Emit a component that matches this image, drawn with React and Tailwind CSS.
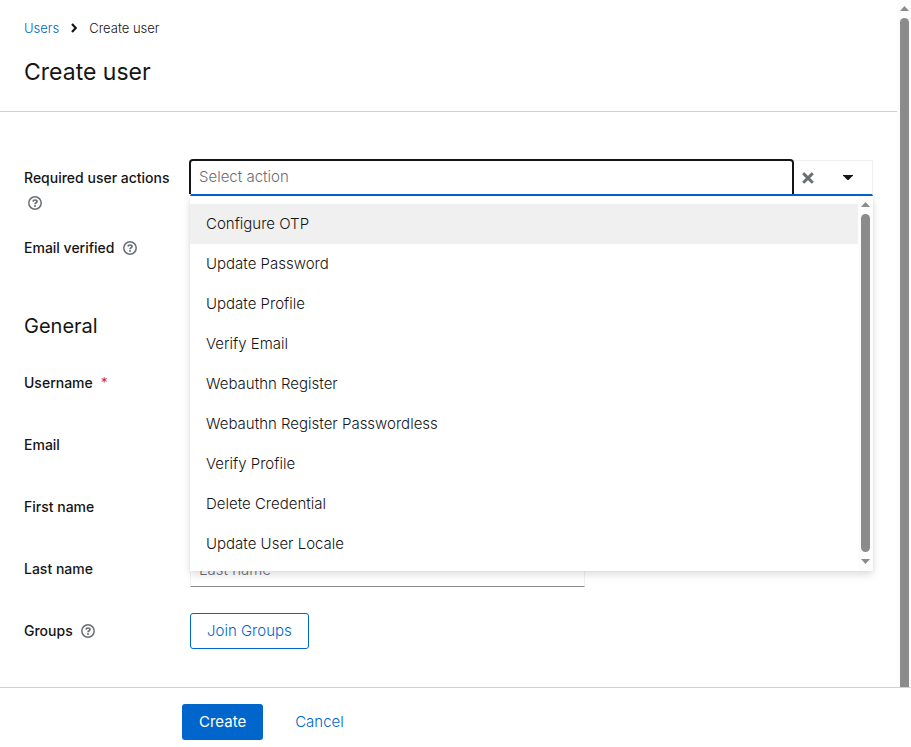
import React, { useState } from 'react';

const ACTIONS = [
  'Configure OTP',
  'Update Password',
  'Update Profile',
  'Verify Email',
  'Webauthn Register',
  'Webauthn Register Passwordless',
  'Verify Profile',
  'Delete Credential',
  'Update User Locale',
];

const TEXT_FIELDS = [
  { id: 'username', label: 'Username', required: true },
  { id: 'email', label: 'Email' },
  { id: 'firstName', label: 'First name' },
  { id: 'lastName', label: 'Last name' },
];

const HelpButton = ({ label }) => (
  <button type="button" aria-label={`Help for ${label}`} className="ml-1 text-[#6a6e73]">
    <svg viewBox="0 0 14 14" className="block size-[14px]" fill="none" stroke="currentColor">
      <circle cx="7" cy="7" r="6.2" strokeWidth="1.5" />
      <path d="M5 5.6C5.1 4.5 5.9 4 7 4s2 .6 2 1.5C9 6.7 7 6.7 7 8.2" strokeWidth="1.7" />
      <circle cx="7" cy="10" r="1" fill="currentColor" stroke="none" />
    </svg>
  </button>
);

const Arrow = ({ down }) => (
  <svg viewBox="0 0 9 5" className="block h-[5px] w-[9px] shrink-0" fill="#8b8b8b">
    <path d={down ? 'M0 0h9L4.5 5z' : 'M0 5h9L4.5 0z'} />
  </svg>
);

const FormRow = ({ id, label, required, help, tall, children }) => (
  <div className="grid grid-cols-[150px_1fr] gap-x-4">
    <div className={tall ? 'flex flex-wrap items-center gap-x-1 gap-y-2 pt-2' : 'flex items-center gap-x-1'}>
      <label htmlFor={id} className="text-sm leading-5 font-medium">
        {label}
        {required && <span className="ml-2 font-light text-[#c9190b]">*</span>}
      </label>
      {help && <HelpButton label={label} />}
    </div>
    {children}
  </div>
);

const ActionSelect = () => {
  const [value, setValue] = useState('');

  return (
    <div className="relative self-start">
      <div className="flex h-9 border border-b-2 border-[#f0f0f0] border-b-[#0066cc]">
        <input
          id="requiredActions"
          role="combobox"
          aria-expanded="true"
          aria-controls="actionList"
          value={value}
          onChange={(e) => setValue(e.target.value)}
          placeholder="Select action"
          className="min-w-0 flex-1 rounded-t-xs px-2 text-[15px] font-light shadow-[0_0_0_2px_#151515] outline-none [clip-path:inset(-2px_-2px_0_-2px)] placeholder:text-[#6a6e73]"
        />
        <button type="button" aria-label="Clear" onClick={() => setValue('')} className="flex w-8 items-center justify-center">
          <svg viewBox="0 0 12 12" className="size-3" stroke="#6a6e73" strokeWidth="3">
            <path d="M1.2 1.2l9.6 9.6M10.8 1.2l-9.6 9.6" />
          </svg>
        </button>
        <button type="button" aria-label="Options menu" className="flex w-12 items-center justify-center">
          <svg viewBox="0 0 10 5" className="h-[5px] w-[10px]" fill="#151515">
            <path d="M0 0h10v.6L5.8 4.7q-.8.6-1.6 0L0 .6z" />
          </svg>
        </button>
      </div>
      <div className="absolute inset-x-0 top-full z-10 flex bg-white shadow-[0_4px_8px_0_rgba(3,3,3,0.12),0_0_4px_0_rgba(3,3,3,0.06)]">
        <ul id="actionList" role="listbox" className="flex-1 pt-2 pb-[7px]">
          {ACTIONS.map((action, i) => (
            <li key={action} role="option" aria-selected="false">
              <button
                type="button"
                onClick={() => setValue(action)}
                className={`block h-10 w-full px-4 text-left text-[15px] font-light ${i === 0 ? 'bg-[#f0f0f0]' : ''}`}
              >
                {action}
              </button>
            </li>
          ))}
        </ul>
        <div className="flex w-[15px] flex-col items-center gap-[7px] bg-[#fcfcfc] pt-[6px] pb-[7px]">
          <Arrow />
          <div className="w-[9px] flex-1 rounded-full bg-[#8b8b8b]" />
          <Arrow down />
        </div>
      </div>
    </div>
  );
};

const App = () => {
  return (
    <div className="flex h-screen flex-col bg-white font-['Inter',sans-serif] text-[#151515]">
      <div className="flex min-h-0 flex-1 overflow-hidden">
        <main className="min-w-0 flex-1">
          <header className="border-b border-[#d2d2d2] px-6 pt-[18px] pb-[23px]">
            <nav aria-label="Breadcrumb" className="flex items-center text-[13px] leading-5 font-light">
              <a href="#users" className="text-[#0066cc]">Users</a>
              <svg viewBox="0 0 6 10" className="mx-3 h-[10px] w-[6px]" fill="none" stroke="#151515" strokeWidth="2.2">
                <path d="M1 1l3.8 4L1 9" />
              </svg>
              <span>Create user</span>
            </nav>
            <h1 className="mt-[18px] text-[23px] leading-8">Create user</h1>
          </header>

          <form id="createUser" onSubmit={(e) => e.preventDefault()} className="px-6 pt-12">
            <div className="grid gap-7">
              <FormRow id="requiredActions" label="Required user actions" help tall>
                <ActionSelect />
              </FormRow>
              <FormRow id="emailVerified" label="Email verified" help>
                <input id="emailVerified" type="checkbox" className="size-4 self-center" />
              </FormRow>
            </div>

            <h2 className="mt-[54px] mb-[25px] text-xl leading-7">General</h2>
            <div className="grid gap-[26px]">
              {TEXT_FIELDS.map(({ id, label, required }) => (
                <FormRow key={id} id={id} label={label} required={required}>
                  <input
                    id={id}
                    type="text"
                    placeholder={label}
                    className="h-9 w-full max-w-[395px] border border-[#f0f0f0] border-b-[#8a8d90] px-2 text-[15px] font-light placeholder:text-[#6a6e73]"
                  />
                </FormRow>
              ))}
              <FormRow id="groups" label="Groups" help>
                <button
                  id="groups"
                  type="button"
                  className="h-9 justify-self-start rounded-[3px] border border-[#0066cc] px-4 text-[15px] font-light text-[#0066cc]"
                >
                  Join Groups
                </button>
              </FormRow>
            </div>
          </form>
        </main>

        <div className="flex w-[14px] flex-col items-center gap-[7px] bg-[#fcfcfc] pt-[6px]">
          <Arrow />
          <div className="w-[9px] flex-1 rounded-t-full bg-[#8b8b8b]" />
        </div>
      </div>

      <footer className="flex gap-[15px] border-t border-[#d2d2d2] pt-4 pb-[7px] pl-[182px]">
        <button type="submit" form="createUser" className="h-9 rounded-[3px] bg-[#0066cc] px-[17px] text-[15px] text-white">
          Create
        </button>
        <button type="button" className="h-9 px-[17px] text-[15px] font-light text-[#0066cc]">
          Cancel
        </button>
      </footer>
    </div>
  );
};

export default App;
